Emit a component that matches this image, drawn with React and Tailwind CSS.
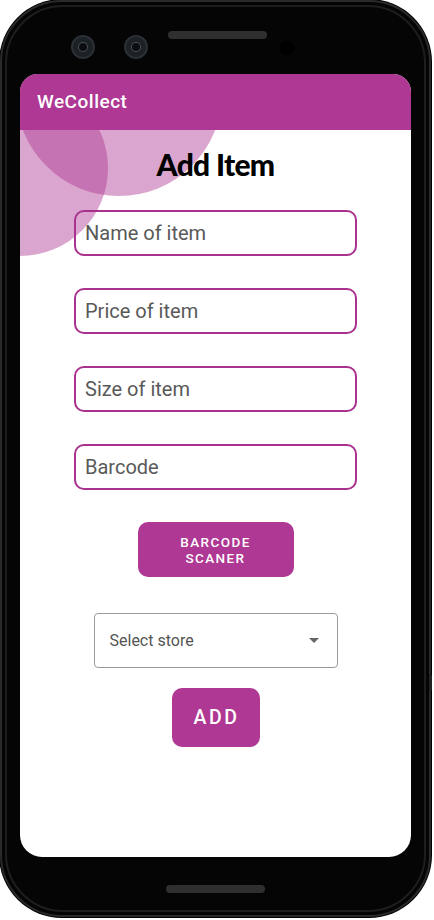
const fields = ["Name of item", "Price of item", "Size of item", "Barcode"];

function Camera() {
  return (
    <span className="mt-[6px] flex h-[20px] w-[20px] items-center justify-center rounded-full bg-[#1c2126] ring-2 ring-[#2a3036]">
      <span className="h-[8px] w-[8px] rounded-full bg-[#0b0d10] ring-1 ring-[#4a5058]" />
    </span>
  );
}

function Bezel() {
  return (
    <div className="flex h-[74px] w-full items-start pl-[71px] pt-[31px]">
      <Camera />
      <span className="ml-[33px]">
        <Camera />
      </span>
      <span className="ml-[22px] h-[8px] w-[99px] rounded-full bg-[#2f2f2f]" />
      <span className="ml-[13px] mt-[10px] h-[14px] w-[14px] rounded-full bg-black" />
    </div>
  );
}

export default function App() {
  return (
    <div className="w-[434px] h-[920px] bg-white" style={{ fontFamily: "Roboto, 'Liberation Sans', sans-serif" }}>
      <div className="relative w-[431px] h-[917px] rounded-[62px] bg-[#050505] border-[2px] border-[#2a2a2a] ring-1 ring-black">
        <div className="absolute inset-[3px] rounded-[58px] border-[2px] border-[#1e1e1e] pointer-events-none" />
        <span className="absolute right-[-3px] top-[672px] h-[18px] w-[3px] rounded-r bg-[#222]" />
        <div className="relative flex flex-col items-center">
          <div className="w-full -mt-[2px]">
            <Bezel />
          </div>

          <div className="relative w-[391px] h-[783px] rounded-[18px] rounded-b-[22px] overflow-hidden bg-white">
            {/* decorative blobs behind the app bar */}
            <div className="absolute left-[-88px] top-[6px] h-[176px] w-[176px] rounded-full bg-[#ae3893]/45" />
            <div className="absolute left-[-4px] top-[-84px] h-[206px] w-[206px] rounded-full bg-[#ae3893]/45" />

            <header className="relative z-10 h-[56px] bg-[#ae3893] flex items-center pl-[17px]">
              <span className="text-white text-[19px] font-medium tracking-[0.5px]">WeCollect</span>
            </header>

            <main className="relative z-10 flex flex-col items-center">
              <h1
                className="mt-[16px] text-[30px] leading-[36px] font-black text-black tracking-[-0.7px]"
                style={{ fontFamily: "Lato, sans-serif" }}
              >
                Add Item
              </h1>

              <div className="mt-[28px] flex flex-col gap-[32px]">
                {fields.map((f) => (
                  <input
                    key={f}
                    placeholder={f}
                    className="w-[283px] h-[46px] rounded-[10px] border-2 border-[#a9328f] bg-transparent px-[9px] text-[20px] text-[#333] placeholder:text-[#595959] outline-none"
                  />
                ))}
              </div>

              <button className="mt-[32px] w-[156px] h-[55px] rounded-[10px] bg-[#ae3893] text-white text-[13.5px] leading-[16px] font-medium tracking-[1.4px]">
                BARCODE
                <br />
                SCANER
              </button>

              <div className="mt-[36px] w-[244px] h-[55px] rounded-[4px] border border-[#9a9a9a] flex items-center justify-between pl-[15px] pr-[18px]">
                <span className="text-[16px] text-[#555]">Select store</span>
                <svg width="10" height="5" viewBox="0 0 10 5">
                  <path d="M0 0h10L5 5z" fill="#666" />
                </svg>
              </div>

              <button className="mt-[20px] w-[88px] h-[59px] rounded-[10px] bg-[#ae3893] text-white text-[19.5px] font-medium tracking-[2.5px] pl-[2px]">
                ADD
              </button>
            </main>
          </div>

          <div className="flex h-[60px] w-full justify-center pt-[28px]">
            <span className="h-[8px] w-[99px] rounded-full bg-[#2f2f2f]" />
          </div>
        </div>
      </div>
    </div>
  );
}
